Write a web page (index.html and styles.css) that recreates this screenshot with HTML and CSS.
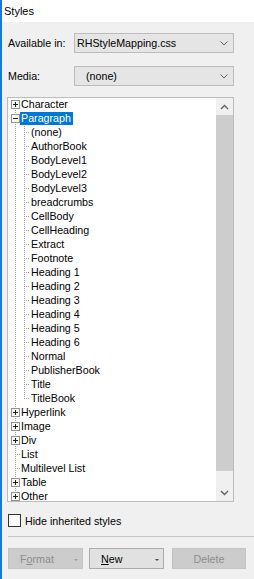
FILE: index.html
```html
<!DOCTYPE html>
<html>
<head>
<meta charset="utf-8">
<title>Styles</title>
<link rel="stylesheet" href="styles.css">
</head>
<body>
<div class="panel">
  <div class="title">Styles</div>
  <div class="content">
    <div class="field">
      <span class="label">Available in:</span>
      <div class="combo">
        <span class="combo-text">RHStyleMapping.css</span>
        <svg class="chev" width="8" height="5" viewBox="0 0 8 5"><path d="M0.5 0.5 L4 4 L7.5 0.5" fill="none" stroke="#606060"/></svg>
      </div>
    </div>
    <div class="field field-media">
      <span class="label">Media:</span>
      <div class="combo">
        <span class="combo-text indent">(none)</span>
        <svg class="chev" width="8" height="5" viewBox="0 0 8 5"><path d="M0.5 0.5 L4 4 L7.5 0.5" fill="none" stroke="#606060"/></svg>
      </div>
    </div>
    <div class="listbox">
      <div class="tree">
        <div class="row root first"><svg class="exp" width="9" height="9" viewBox="0 0 9 9"><rect x="0.5" y="0.5" width="8" height="8" fill="#f7f7f7" stroke="#919191"/><path d="M2 4.5h5M4.5 2v5" stroke="#1e1e1e"/></svg><span class="lbl">Character</span></div>
        <div class="row root"><svg class="exp" width="9" height="9" viewBox="0 0 9 9"><rect x="0.5" y="0.5" width="8" height="8" fill="#f7f7f7" stroke="#919191"/><path d="M2 4.5h5" stroke="#1e1e1e"/></svg><span class="lbl sel">Paragraph</span></div>
        <div class="row child"><span class="lbl">(none)</span></div>
        <div class="row child"><span class="lbl">AuthorBook</span></div>
        <div class="row child"><span class="lbl">BodyLevel1</span></div>
        <div class="row child"><span class="lbl">BodyLevel2</span></div>
        <div class="row child"><span class="lbl">BodyLevel3</span></div>
        <div class="row child"><span class="lbl">breadcrumbs</span></div>
        <div class="row child"><span class="lbl">CellBody</span></div>
        <div class="row child"><span class="lbl">CellHeading</span></div>
        <div class="row child"><span class="lbl">Extract</span></div>
        <div class="row child"><span class="lbl">Footnote</span></div>
        <div class="row child"><span class="lbl">Heading 1</span></div>
        <div class="row child"><span class="lbl">Heading 2</span></div>
        <div class="row child"><span class="lbl">Heading 3</span></div>
        <div class="row child"><span class="lbl">Heading 4</span></div>
        <div class="row child"><span class="lbl">Heading 5</span></div>
        <div class="row child"><span class="lbl">Heading 6</span></div>
        <div class="row child"><span class="lbl">Normal</span></div>
        <div class="row child"><span class="lbl">PublisherBook</span></div>
        <div class="row child"><span class="lbl">Title</span></div>
        <div class="row child last"><span class="lbl">TitleBook</span></div>
        <div class="row root"><svg class="exp" width="9" height="9" viewBox="0 0 9 9"><rect x="0.5" y="0.5" width="8" height="8" fill="#f7f7f7" stroke="#919191"/><path d="M2 4.5h5M4.5 2v5" stroke="#1e1e1e"/></svg><span class="lbl">Hyperlink</span></div>
        <div class="row root"><svg class="exp" width="9" height="9" viewBox="0 0 9 9"><rect x="0.5" y="0.5" width="8" height="8" fill="#f7f7f7" stroke="#919191"/><path d="M2 4.5h5M4.5 2v5" stroke="#1e1e1e"/></svg><span class="lbl">Image</span></div>
        <div class="row root"><svg class="exp" width="9" height="9" viewBox="0 0 9 9"><rect x="0.5" y="0.5" width="8" height="8" fill="#f7f7f7" stroke="#919191"/><path d="M2 4.5h5M4.5 2v5" stroke="#1e1e1e"/></svg><span class="lbl">Div</span></div>
        <div class="row root nobox"><span class="lbl">List</span></div>
        <div class="row root nobox"><span class="lbl">Multilevel List</span></div>
        <div class="row root"><svg class="exp" width="9" height="9" viewBox="0 0 9 9"><rect x="0.5" y="0.5" width="8" height="8" fill="#f7f7f7" stroke="#919191"/><path d="M2 4.5h5M4.5 2v5" stroke="#1e1e1e"/></svg><span class="lbl">Table</span></div>
        <div class="row root"><svg class="exp" width="9" height="9" viewBox="0 0 9 9"><rect x="0.5" y="0.5" width="8" height="8" fill="#f7f7f7" stroke="#919191"/><path d="M2 4.5h5M4.5 2v5" stroke="#1e1e1e"/></svg><span class="lbl">Other</span></div>
      </div>
      <div class="vscroll">
        <div class="sb-btn"><svg width="9" height="6" viewBox="0 0 9 6"><path d="M1 5 L4.5 1.5 L8 5" fill="none" stroke="#606060" stroke-width="1.4"/></svg></div>
        <div class="sb-track"><div class="sb-thumb"></div></div>
        <div class="sb-btn"><svg width="9" height="6" viewBox="0 0 9 6"><path d="M1 1 L4.5 4.5 L8 1" fill="none" stroke="#606060" stroke-width="1.4"/></svg></div>
      </div>
    </div>
    <div class="check"><span class="box"></span><span>Hide inherited styles</span></div>
  </div>
  <div class="sep"></div>
  <div class="buttons">
    <div class="btn btn-split disabled"><span class="btn-text">F<u>o</u>rmat</span><span class="caret"></span></div>
    <div class="btn btn-split btn-new"><span class="btn-text"><u>N</u>ew</span><span class="caret"></span></div>
    <div class="btn btn-delete disabled"><span>Delete</span></div>
  </div>
</div>
</body>
</html>
```
FILE: styles.css
```css
* { box-sizing: border-box; }
html, body { margin: 0; padding: 0; }
body {
  width: 254px;
  height: 579px;
  overflow: hidden;
  background: #f0f0f0;
  font-family: "Liberation Sans", Arial, sans-serif;
  font-size: 10.7px;
  color: #000;
}
.panel {
  height: 579px;
  border-left: 2px solid #1979d6;
  display: flex;
  flex-direction: column;
}
.title {
  height: 22px;
  background: #fff;
  padding-left: 2px;
  font-size: 11px;
  line-height: 23px;
}
.content {
  padding: 11px 20px 0 5px;
  display: flex;
  flex-direction: column;
}
.field {
  display: flex;
  align-items: center;
  height: 20px;
}
.field-media { margin-top: 13px; }
.label {
  width: 67px;
  padding-left: 1px;
}
.combo {
  width: 160px;
  height: 20px;
  border: 1px solid #bcbcbc;
  background: #e5e5e5;
  display: flex;
  align-items: center;
  justify-content: space-between;
  padding: 0 5px 0 2px;
}
.combo-text.indent { padding-left: 9px; }
.chev { display: block; }

.listbox {
  margin-top: 11px;
  height: 405px;
  border: 1px solid #bcbcbc;
  background: #fff;
  display: flex;
}
.tree {
  flex: 1;
  overflow: hidden;
}
.row {
  display: flex;
  align-items: flex-start;
  height: 14px;
  flex-shrink: 0;
  background-repeat: no-repeat;
}
.root {
  padding-left: 3px;
  background-image:
    repeating-linear-gradient(to bottom, #a0a0a0 0 1px, transparent 1px 2px),
    repeating-linear-gradient(to right, #a0a0a0 0 1px, transparent 1px 2px);
  background-size: 1px 14px, 5px 1px;
  background-position: 7px 0, 7px 6px;
}
.root.first {
  background-size: 1px 8px, 5px 1px;
  background-position: 7px 6px, 7px 6px;
}
.root.nobox { padding-left: 12px; }
.exp {
  display: block;
  margin-top: 2px;
  flex-shrink: 0;
}
.child {
  padding-left: 22px;
  background-image:
    repeating-linear-gradient(to bottom, #a0a0a0 0 1px, transparent 1px 2px),
    repeating-linear-gradient(to bottom, #a0a0a0 0 1px, transparent 1px 2px),
    repeating-linear-gradient(to right, #a0a0a0 0 1px, transparent 1px 2px);
  background-size: 1px 14px, 1px 14px, 6px 1px;
  background-position: 7px 0, 16px 0, 16px 6px;
}
.child.last {
  background-size: 1px 14px, 1px 7px, 6px 1px;
}
.lbl {
  display: block;
  height: 13px;
  line-height: 13px;
  padding: 0 2px 0 1px;
  white-space: nowrap;
}
.lbl.sel {
  background: #0078d7;
  color: #fff;
}

.vscroll {
  width: 17px;
  display: flex;
  flex-direction: column;
  background: #f0f0f0;
}
.sb-btn {
  height: 17px;
  display: flex;
  align-items: center;
  justify-content: center;
}
.sb-btn svg { display: block; }
.sb-track { flex: 1; }
.sb-thumb {
  height: 356px;
  background: #cdcdcd;
}

.check {
  margin-top: 12px;
  margin-left: 1px;
  display: flex;
  align-items: center;
  height: 13px;
}
.box {
  width: 13px;
  height: 13px;
  border: 1px solid #333;
  background: #fff;
  margin-right: 4px;
}
.sep {
  margin: 9px 0 0 6px;
  height: 1px;
  background: #c4c4c4;
}
.buttons {
  display: flex;
  margin-top: 11px;
  padding-left: 6px;
}
.btn {
  width: 75px;
  height: 21px;
  border: 1px solid #adadad;
  background: #e1e1e1;
  display: flex;
  align-items: center;
  justify-content: center;
}
.btn.disabled {
  background: #cccccc;
  border-color: #c4c4c4;
  color: #8c8c8c;
}
.btn-split {
  justify-content: flex-start;
  padding-left: 11px;
}
.btn-split .btn-text { width: 54px; }
.btn-new { margin-left: 6px; }
.btn-delete { margin-left: 8px; width: 74px; }
.caret {
  width: 0;
  height: 0;
  border-left: 2px solid transparent;
  border-right: 2px solid transparent;
  border-top: 2px solid #444;
  margin-top: 2px;
}
.btn.disabled .caret { border-top-color: #9a9a9a; }
u { text-decoration-thickness: 1px; text-underline-offset: 1px; }
```
